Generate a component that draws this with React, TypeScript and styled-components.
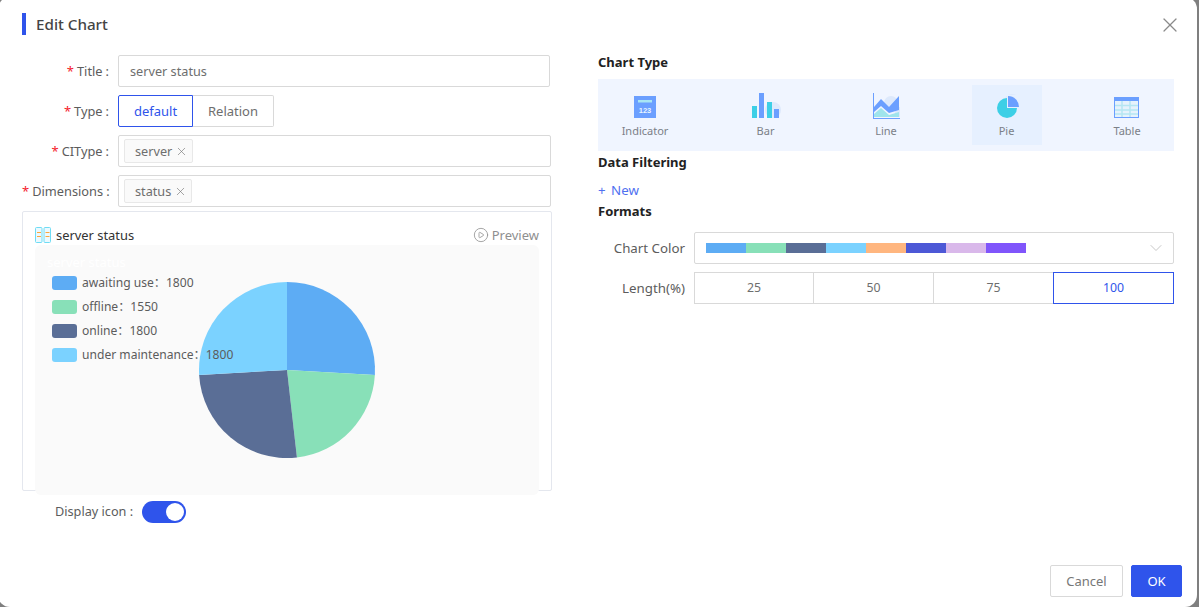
import React from "react";
import styled, { createGlobalStyle } from "styled-components";
import { X, ChevronDown, CirclePlay } from "lucide-react";

const Global = createGlobalStyle`
  html, body { margin: 0; padding: 0; height: 100%; overflow: hidden; background: #7f7f7f; }
  body { font-family: "Noto Sans", "Noto Sans CJK SC", sans-serif; font-size: 13px; color: #555; }
  * { box-sizing: border-box; }
`;

const Dialog = styled.div`
  width: 1199px; height: 610px; margin: -3px 0 0 -2px;
  background: #fff; border-radius: 12px;
  display: flex; flex-direction: column;
`;
const Header = styled.header`
  height: 55px; padding: 16px 15px 0 24px;
  display: flex; justify-content: space-between; align-items: flex-start;
`;
const TitleWrap = styled.div`display: flex; align-items: center; gap: 10px; height: 22px;`;
const TitleBar = styled.span`width: 4px; height: 22px; background: #2f54eb;`;
const Title = styled.h1`margin: 0; font-size: 15.2px; font-weight: 500; color: #444; line-height: 22px;`;
const Close = styled.span`display: flex; color: #8a8a8a;`;

const Body = styled.main`display: flex; padding-left: 24px; flex: 1;`;
const Left = styled.section`width: 530px; margin-top: 3px; margin-right: 46px; display: flex; flex-direction: column;`;
const Right = styled.section`width: 576px; display: flex; flex-direction: column;`;

const FormRow = styled.div`display: flex; align-items: center; height: 32px; margin-bottom: 8px;`;
const Label = styled.label`
  width: 88px; margin-right: 8px; text-align: right; white-space: nowrap;
  font-size: 12.8px; color: #5c5c5c;
`;
const Req = styled.span`color: #f5222d; margin-right: 3px; font-size: 13px;`;
const Colon = styled.span`margin: 0 1px 0 3px;`;
const Input = styled.div`
  width: 432px; height: 32px; border: 1px solid #d9d9d9; border-radius: 2px;
  padding: 0 11px; line-height: 30px; font-size: 12.7px; color: #6e6e6e;
`;
const Multi = styled.div`
  width: 433px; height: 32px; border: 1px solid #d9d9d9; border-radius: 2px;
  padding: 3px 5px; display: flex; align-items: center;
`;
const Tag = styled.span`
  height: 24px; padding: 0 4px 0 10px; display: inline-flex; align-items: center; gap: 3px;
  background: #fafafa; border: 1px solid #e8e8e8; border-radius: 2px; font-size: 12.7px; color: #6e6e6e;
`;
const TagX = styled.span`display: flex; color: #777;`;
const Segments = styled.div`display: flex; height: 32px;`;
const Segment = styled.button<{ $active?: boolean; $w: number }>`
  width: ${p => p.$w}px; height: 32px; padding: 0; background: #fff; font: inherit; font-size: 13px;
  color: ${p => (p.$active ? "#2f54eb" : "#6e6e6e")};
  border: 1px solid ${p => (p.$active ? "#2f54eb" : "#d9d9d9")};
  border-left-width: ${p => (p.$active ? 1 : 0)}px;
  &:first-child { border-radius: 2px 0 0 2px; }
  &:last-child { border-radius: 0 2px 2px 0; }
`;

const Card = styled.div`
  width: 530px; height: 280px; margin-top: -4px; padding: 0 12px 0 12px;
  border: 1px solid #e4e7ee; border-radius: 2px;
`;
const CardHead = styled.div`height: 33px; display: flex; justify-content: space-between; align-items: flex-end; padding-bottom: 1px;`;
const CardName = styled.div`display: flex; align-items: center; gap: 5px; color: #333; font-size: 12.9px; line-height: 18px;`;
const PreviewLink = styled.div`display: flex; align-items: center; gap: 3px; color: #8f8f8f; font-size: 13px; line-height: 18px;`;
const Canvas = styled.div`position: relative; width: 504px; height: 250px; background: #fafafa; border-radius: 6px;`;
const ChartTitle = styled.div`position: absolute; left: 12px; top: 8px; color: #fff; font-size: 13px; line-height: 18px;`;
const Legend = styled.ul`position: absolute; left: 17px; top: 25px; margin: 0; padding: 0; list-style: none;`;
const LegendRow = styled.li`display: flex; align-items: center; height: 24px; font-size: 12.1px; color: #5c5c5c; white-space: nowrap;`;
const Swatch = styled.span<{ $c: string }>`width: 25px; height: 14px; border-radius: 3px; margin: 1px 5px 0 0; background: ${p => p.$c};`;
const PieSvg = styled.svg`display: block;`;

const DisplayRow = styled.div`display: flex; align-items: center; height: 22px; margin-top: 10px; padding-left: 33px;`;
const DisplayLabel = styled.span`width: 87px; margin-top: -2px; font-size: 12.7px; color: #5c5c5c; white-space: nowrap;`;
const Switch = styled.span`
  width: 44px; height: 22px; border-radius: 11px; background: #2f54eb; display: flex; justify-content: flex-end; padding: 2px;
`;
const Knob = styled.span`width: 18px; height: 18px; border-radius: 50%; background: #fff;`;

const Heading = styled.h2<{ $mb: number }>`
  margin: 0 0 ${p => p.$mb}px; font-size: 13px; font-weight: 700; line-height: 20px; color: #222; 
`;
const TypePanel = styled.div`
  height: 72px; padding: 6px 12px; background: #f0f5ff; display: flex; justify-content: space-between; margin-bottom: 1px;
`;
const TypeItem = styled.div<{ $active?: boolean }>`
  width: 70px; height: 60px; padding-top: 8px; display: flex; flex-direction: column; align-items: center;
  background: ${p => (p.$active ? "#e6f0ff" : "transparent")};
`;
const TypeLabel = styled.span`font-size: 11px; line-height: 16px; margin-top: 4px; color: #7b8088;`;
const NewLink = styled.div`height: 20px; margin-bottom: 1px; font-size: 13.3px; line-height: 20px; word-spacing: 2px; color: #4f70f0;`;
const FormatRow = styled.div`display: flex; align-items: center; height: 32px; margin-bottom: 8px;`;
const FormatLabel = styled.span`width: 87px; margin-right: 9px; text-align: right; font-size: 13.3px; color: #5c5c5c; white-space: nowrap;`;
const ColorSelect = styled.div`
  width: 480px; height: 32px; border: 1px solid #d9d9d9; border-radius: 2px; padding: 0 7px 0 11px;
  display: flex; align-items: center; justify-content: space-between; color: #c8c8c8;
`;
const ColorStrip = styled.div`display: flex;`;
const ColorCell = styled.span<{ $c: string }>`width: 40px; height: 10px; background: ${p => p.$c};`;
const Lengths = styled.div`display: flex; width: 480px; height: 32px;`;
const LengthCell = styled.div<{ $active?: boolean }>`
  width: ${p => (p.$active ? 121 : 120)}px; height: 32px; text-align: center; line-height: 30px; font-size: 12.3px;
  margin-left: ${p => (p.$active ? -1 : 0)}px;
  color: ${p => (p.$active ? "#2f54eb" : "#6e6e6e")};
  border: 1px solid ${p => (p.$active ? "#2f54eb" : "#d9d9d9")};
  border-left-width: ${p => (p.$active ? 1 : 0)}px;
  position: relative; z-index: ${p => (p.$active ? 1 : 0)};
  &:first-child { border-left-width: 1px; }
`;

const Footer = styled.footer`display: flex; justify-content: flex-end; gap: 8px; padding: 0 15px 10px 0;`;
const Btn = styled.button<{ $primary?: boolean; $w: number }>`
  width: ${p => p.$w}px; height: 32px; padding: 0; border-radius: 2px; font: inherit; font-size: 13px;
  background: ${p => (p.$primary ? "#2f54eb" : "#fff")};
  color: ${p => (p.$primary ? "#fff" : "#777")};
  border: 1px solid ${p => (p.$primary ? "#2f54eb" : "#d9d9d9")};
`;

const pieData = [
  { name: "awaiting use", value: 1800, color: "#5dacf4" },
  { name: "offline", value: 1550, color: "#88e0b8" },
  { name: "online", value: 1800, color: "#5a6e96" },
  { name: "under maintenance", value: 1800, color: "#7bd2ff" },
];
const palette = ["#5dacf4", "#88e0b8", "#5a6e96", "#7bd2ff", "#ffb67f", "#4d58d6", "#d9b8ea", "#8055fb"];

function Pie() {
  const total = pieData.reduce((s, d) => s + d.value, 0);
  let acc = 0;
  const cx = 252, cy = 125, r = 88;
  const pt = (a: number) => `${cx + r * Math.sin(a)} ${cy - r * Math.cos(a)}`;
  return (
    <PieSvg width="504" height="250" viewBox="0 0 504 250">
      {pieData.map(d => {
        const a0 = (acc / total) * Math.PI * 2;
        acc += d.value;
        const a1 = (acc / total) * Math.PI * 2;
        return <path key={d.name} fill={d.color} d={`M${cx} ${cy} L${pt(a0)} A${r} ${r} 0 0 1 ${pt(a1)} Z`} />;
      })}
    </PieSvg>
  );
}

const IconIndicator = () => (
  <svg width="30" height="26" viewBox="0 0 30 26">
    <rect x="4" y="3" width="22" height="22" fill="#6b9fff" />
    <rect x="8" y="7" width="14" height="2.5" fill="#a8e6f4" />
    <text x="15" y="20" textAnchor="middle" fontSize="7.5" fontWeight="700" fontFamily="Liberation Sans, sans-serif" fill="#e8f4ff">123</text>
  </svg>
);
const IconBar = () => (
  <svg width="30" height="26" viewBox="0 0 30 26">
    <circle cx="22" cy="17" r="8" fill="#dde9fc" />
    <rect x="1" y="13" width="5" height="12" fill="#3dcfe6" />
    <rect x="8" y="0" width="5" height="25" fill="#6b9fff" />
    <rect x="16" y="9" width="5" height="16" fill="#3dcfe6" />
    <rect x="23" y="16" width="5" height="9" fill="#6b9fff" />
  </svg>
);
const IconLine = () => (
  <svg width="30" height="26" viewBox="0 0 30 26">
    <circle cx="20" cy="10" r="7" fill="#dde9fc" />
    <rect x="24" y="14" width="5" height="10" fill="#dde9fc" />
    <polygon points="3,14 10,6 18,14 28,3 28,17 18,20 10,13 3,19" fill="#6b9fff" />
    <polygon points="3,21 10,15 18,22 28,19 28,24 3,24" fill="#9fe4ec" />
    <rect x="2" y="0" width="1" height="26" fill="#6b9fff" />
    <rect x="2" y="25" width="27" height="1" fill="#6b9fff" />
  </svg>
);
const IconPie = () => (
  <svg width="30" height="26" viewBox="0 0 30 26">
    <circle cx="20" cy="9" r="8" fill="#dde9fc" />
    <circle cx="15" cy="15" r="10" fill="#3dcfe6" />
    <path d="M15 15V2H29V15Z" fill="#e6f0ff" />
    <path d="M16 3A11 11 0 0 1 27 14H16Z" fill="#6b9fff" />
  </svg>
);
const IconTable = () => (
  <svg width="30" height="26" viewBox="0 0 30 26">
    <rect x="2.5" y="4.5" width="24" height="20" fill="#e6f2fc" stroke="#6b9fff" />
    <rect x="2" y="4" width="25" height="4" fill="#6b9fff" />
    <path d="M3 12.5H26M3 17H26M3 21H26M10 8V24M18 8V24" stroke="#b5e6f2" strokeWidth="1.5" />
  </svg>
);
const IconDash = () => (
  <svg width="16" height="16" viewBox="0 0 16 16">
    <rect x="0.5" y="0.5" width="6.5" height="15" rx="1" fill="#eaf9ff" stroke="#6fdcf4" />
    <rect x="9" y="0.5" width="6.5" height="15" rx="1" fill="#eaf9ff" stroke="#6fdcf4" />
    <path d="M2 5.5H6M2 9.5H6M10.5 5.5H14.5M10.5 9.5H14.5" stroke="#fba63c" strokeWidth="1.2" />
  </svg>
);

const types = [
  { label: "Indicator", Icon: IconIndicator },
  { label: "Bar", Icon: IconBar },
  { label: "Line", Icon: IconLine },
  { label: "Pie", Icon: IconPie, active: true },
  { label: "Table", Icon: IconTable },
];

const FieldLabel = ({ text }: { text: string }) => (
  <Label><Req>*</Req>{text}<Colon>:</Colon></Label>
);
const Chip = ({ text }: { text: string }) => (
  <Tag>{text}<TagX><X size={13} strokeWidth={1.2} /></TagX></Tag>
);

export default function App() {
  return (
    <>
      <Global />
      <Dialog>
        <Header>
          <TitleWrap><TitleBar /><Title>Edit Chart</Title></TitleWrap>
          <Close><X size={24} strokeWidth={1.2} /></Close>
        </Header>
        <Body>
          <Left>
            <FormRow><FieldLabel text="Title" /><Input>server status</Input></FormRow>
            <FormRow>
              <FieldLabel text="Type" />
              <Segments>
                <Segment $active $w={75}>default</Segment>
                <Segment $w={81}>Relation</Segment>
              </Segments>
            </FormRow>
            <FormRow><FieldLabel text="CIType" /><Multi><Chip text="server" /></Multi></FormRow>
            <FormRow><FieldLabel text="Dimensions" /><Multi><Chip text="status" /></Multi></FormRow>
            <Card>
              <CardHead>
                <CardName><IconDash />server status</CardName>
                <PreviewLink><CirclePlay size={16} strokeWidth={1.2} />Preview</PreviewLink>
              </CardHead>
              <Canvas>
                <Pie />
                <ChartTitle>server status</ChartTitle>
                <Legend>
                  {pieData.map(d => (
                    <LegendRow key={d.name}><Swatch $c={d.color} />{d.name}：{d.value}</LegendRow>
                  ))}
                </Legend>
              </Canvas>
            </Card>
            <DisplayRow>
              <DisplayLabel>Display icon :</DisplayLabel>
              <Switch><Knob /></Switch>
            </DisplayRow>
          </Left>
          <Right>
            <Heading $mb={7}>Chart Type</Heading>
            <TypePanel>
              {types.map(({ label, Icon, active }) => (
                <TypeItem key={label} $active={active}><Icon /><TypeLabel>{label}</TypeLabel></TypeItem>
              ))}
            </TypePanel>
            <Heading $mb={8}>Data Filtering</Heading>
            <NewLink>+ New</NewLink>
            <Heading $mb={11}>Formats</Heading>
            <FormatRow>
              <FormatLabel>Chart Color</FormatLabel>
              <ColorSelect>
                <ColorStrip>{palette.map(c => <ColorCell key={c} $c={c} />)}</ColorStrip>
                <ChevronDown size={20} strokeWidth={1.2} />
              </ColorSelect>
            </FormatRow>
            <FormatRow>
              <FormatLabel>Length(%)</FormatLabel>
              <Lengths>
                {[25, 50, 75].map(n => <LengthCell key={n}>{n}</LengthCell>)}
                <LengthCell $active>100</LengthCell>
              </Lengths>
            </FormatRow>
          </Right>
        </Body>
        <Footer>
          <Btn $w={73}>Cancel</Btn>
          <Btn $primary $w={51}>OK</Btn>
        </Footer>
      </Dialog>
    </>
  );
}
